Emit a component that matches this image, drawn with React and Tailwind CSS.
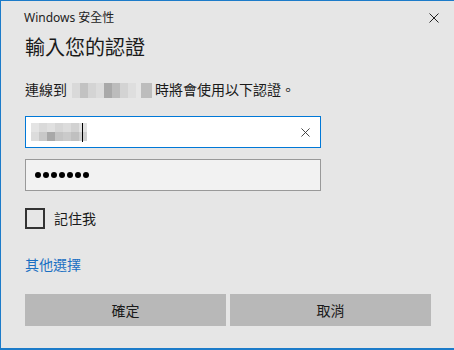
import React from 'react';

const font = { fontFamily: '"Noto Sans", "Noto Sans CJK TC", sans-serif' };

// 打码区块（连线目标）
const hostBlocks = ['#d9d9d9', '#c2c2c2', '#d4d4d4', '#dcdcdc', '#a9a9a9', '#bcbcbc', '#d3d3d3', '#dedede'];
// 打码区块（用户名，两行）
const userRows = [
  ['#e4e4e4', '#dadada', '#e0e0e0', '#d6d6d6', '#dcdcdc', '#d2d2d2', '#e2e2e2'],
  ['#dcdcdc', '#c8c8c8', '#a8a8a8', '#c4c4c4', '#cacaca', '#c0c0c0', '#d0d0d0'],
];

const CloseIcon = ({ size = 10, className = '' }) => (
  <svg width={size} height={size} viewBox="0 0 10 10" className={className}>
    <path d="M0.5 0.5 L9.5 9.5 M9.5 0.5 L0.5 9.5" stroke="currentColor" strokeWidth="1" fill="none" />
  </svg>
);

export default function App() {
  return (
    <div
      className="w-[454px] h-[350px] bg-[#e6e6e6] border-l border-t border-b-2 border-[#1c7bc9] text-[#1a1a1a] flex flex-col overflow-hidden"
      style={font}
    >
      {/* 标题栏 */}
      <div className="h-[33px] flex items-center justify-between pl-[23px] pr-[15px] shrink-0">
        <span className="text-[12px] leading-[16px] text-[#222]">Windows 安全性</span>
        <CloseIcon className="text-[#222]" />
      </div>

      <div className="flex flex-col pl-[24px] pr-[23px]">
        <div className="text-[20px] leading-[28px] text-[#1a1a1a]">輸入您的認證</div>

        {/* 说明 */}
        <div className="mt-[18px] h-[20px] flex items-center text-[14px] leading-[20px]">
          <span>連線到</span>
          <div className="flex ml-[5px] mr-[3px] h-[15px]">
            {hostBlocks.map((c, i) => (
              <div key={i} className="w-[8px] h-full" style={{ backgroundColor: c }} />
            ))}
            <div className="w-[5px]" />
            <div className="w-[11px] h-full bg-[#bdbdbd]" />
          </div>
          <span>時將會使用以下認證。</span>
        </div>

        {/* 用户名 */}
        <div className="mt-[16px] w-[296px] h-[32px] bg-white border border-[#0078d7] flex items-center pl-[5px] pr-[10px]">
          <div className="flex flex-col">
            {userRows.map((row, r) => (
              <div key={r} className="flex">
                {row.map((c, i) => (
                  <div key={i} className="w-[8px] h-[9px]" style={{ backgroundColor: c }} />
                ))}
              </div>
            ))}
          </div>
          <div className="w-px h-[19px] bg-black -ml-[5px]" />
          <div className="flex-1" />
          <CloseIcon size={9} className="text-[#333]" />
        </div>

        {/* 密码 */}
        <div className="mt-[11px] w-[296px] h-[32px] bg-[#f2f2f2] border border-[#999] flex items-center pl-[9px] gap-[2px]">
          {Array.from({ length: 7 }).map((_, i) => (
            <div key={i} className="w-[6px] h-[6px] rounded-full bg-black" />
          ))}
        </div>

        {/* 记住我 */}
        <div className="mt-[17px] flex items-center">
          <div className="w-[20px] h-[21px] border-2 border-[#333] bg-transparent" />
          <span className="ml-[9px] text-[14px] leading-[20px]">記住我</span>
        </div>

        <div className="mt-[26px] text-[14px] leading-[20px] text-[#1a6fc2]">其他選擇</div>

        {/* 按钮 */}
        <div className="mt-[19px] flex gap-[4px]">
          <button className="w-[201px] h-[32px] bg-[#b8b8b8] text-[14px] text-[#1a1a1a]">確定</button>
          <button className="w-[201px] h-[32px] bg-[#b8b8b8] text-[14px] text-[#1a1a1a]">取消</button>
        </div>
      </div>
    </div>
  );
}
